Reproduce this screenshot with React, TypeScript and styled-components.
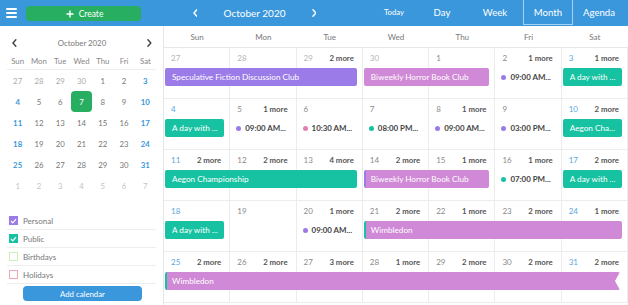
import React from "react"
import styled, { createGlobalStyle } from "styled-components"

const GlobalStyle = createGlobalStyle`
  html, body {
    margin: 0;
    padding: 0;
    background: #fff;
    font-family: Lato, "Open Sans", sans-serif;
  }
  * { box-sizing: border-box; }
`

const BLUE = "#3a97dc"
const GREEN = "#27ae60"
const PURPLE = "#9b7be8"
const PINK = "#d089d6"
const TEAL = "#17c2a2"

const Page = styled.div`
  width: 628px;
  height: 305px;
  overflow: hidden;
  display: flex;
  flex-direction: column;
`

const TopBar = styled.header`
  height: 26px;
  flex: none;
  background: ${BLUE};
  display: flex;
  align-items: stretch;
  color: #fff;
`

const BarLeft = styled.div`
  width: 164px;
  display: flex;
  align-items: center;
  padding-left: 6px;
  gap: 9px;
`

const Burger = styled.span`
  width: 11px;
  display: flex;
  flex-direction: column;
  gap: 2px;
  span {
    height: 2px;
    background: #fff;
    border-radius: 1px;
  }
`

const CreateButton = styled.button`
  width: 115px;
  height: 15px;
  margin-top: 1px;
  border: none;
  border-radius: 4px;
  background: ${GREEN};
  color: #fff;
  font: 8.5px Lato, sans-serif;
  display: flex;
  align-items: center;
  justify-content: center;
  gap: 5px;
  padding: 0 0 0 2px;
`

const NavGroup = styled.div`
  display: flex;
  align-items: center;
  margin-left: 21px;
`

const Arrow = styled.span`
  width: 20px;
  display: flex;
  justify-content: center;
`

const Title = styled.span`
  width: 99px;
  text-align: center;
  font-size: 10px;
`

const Tabs = styled.div`
  display: flex;
  margin-left: auto;
  margin-right: 3px;
`

const Tab = styled.div<{ $w: number; $active?: boolean; $small?: boolean }>`
  width: ${(p) => p.$w}px;
  display: flex;
  align-items: center;
  justify-content: center;
  font-size: ${(p) => (p.$small ? 7.8 : 9.6)}px;
  border: 1px solid ${(p) => (p.$active ? "rgba(255,255,255,0.55)" : "transparent")};
  border-top: none;
  margin-bottom: 1px;
`

const Body = styled.div`
  flex: 1;
  display: grid;
  grid-template-columns: 164px 1fr;
  min-height: 0;
`

const Sidebar = styled.aside`
  border-right: 1px solid #e6e6e6;
  padding: 8px 7px 0 7px;
  display: flex;
  flex-direction: column;
`

const MiniHead = styled.div`
  height: 18px;
  display: flex;
  align-items: center;
  justify-content: space-between;
  padding: 0 4px 0 5px;
  font-size: 7.8px;
  color: #777;
`

const MiniGrid = styled.div`
  display: grid;
  grid-template-columns: repeat(7, 1fr);
`

const MiniWeekday = styled.div`
  height: 18px;
  border-bottom: 1px solid #eee;
  display: flex;
  align-items: center;
  justify-content: center;
  padding-top: 1px;
  font-size: 7.8px;
  color: #888;
`

const MiniDay = styled.div<{ $tone: string; $selected?: boolean }>`
  height: 21px;
  display: flex;
  align-items: center;
  justify-content: center;
  font-size: 7.8px;
  color: ${(p) => (p.$selected ? "#fff" : p.$tone)};
  font-weight: ${(p) => (p.$tone === BLUE ? 700 : 400)};
  background: ${(p) => (p.$selected ? GREEN : "transparent")};
  border-radius: 4px;
  margin: 0 0.5px;
`

const CalList = styled.ul`
  list-style: none;
  margin: 16px 0 0 0;
  padding: 0;
`

const CalItem = styled.li`
  height: 18px;
  border-bottom: 1px solid #eee;
  display: flex;
  align-items: center;
  gap: 5px;
  padding-left: 2px;
  font-size: 8px;
  color: #777;
`

const Check = styled.span<{ $color: string; $checked?: boolean }>`
  width: 9px;
  height: 9px;
  border: 1px solid ${(p) => p.$color};
  background: ${(p) => (p.$checked ? p.$color : "#fff")};
  display: flex;
  align-items: center;
  justify-content: center;
`

const AddButton = styled.button`
  width: 119px;
  height: 15px;
  margin: 2px 0 0 16px;
  border: none;
  border-radius: 4px;
  background: ${BLUE};
  color: #fff;
  font: 7.8px Lato, sans-serif;
  padding: 0;
`

const Month = styled.main`
  display: grid;
  grid-template-rows: 22px repeat(5, 51px);
  min-width: 0;
`

const DayHeads = styled.div`
  display: grid;
  grid-template-columns: repeat(7, 1fr);
  border-bottom: 1px solid #e8e8e8;
`

const DayHead = styled.div`
  display: flex;
  align-items: center;
  justify-content: center;
  font-size: 8px;
  color: #777;
`

const Week = styled.div`
  display: grid;
  grid-template-columns: repeat(7, 1fr);
  grid-template-rows: 20px 18px 1fr;
  border-bottom: 1px solid #ececec;
`

const Cell = styled.div<{ $col: number }>`
  grid-column: ${(p) => p.$col};
  grid-row: 1 / -1;
  border-right: 1px solid #ececec;
`

const CellHead = styled.div`
  height: 20px;
  display: flex;
  align-items: center;
  justify-content: space-between;
  padding: 0 8px 0 7px;
  font-size: 8px;
`

const DayNum = styled.span<{ $tone: string }>`
  color: ${(p) => p.$tone};
`

const More = styled.span`
  color: #555;
  font-weight: 700;
  font-size: 7.8px;
`

const Bar = styled.div<{ $from: number; $span: number; $color: string; $edge?: string; $notch?: boolean }>`
  grid-row: 2;
  grid-column: ${(p) => p.$from} / span ${(p) => p.$span};
  margin: 0 ${(p) => (p.$notch ? 8 : 6)}px 0 1px;
  background: ${(p) => p.$color};
  border-left: 2px solid ${(p) => p.$edge || p.$color};
  border-radius: 2px;
  color: #fff;
  font-size: 8.2px;
  display: flex;
  align-items: center;
  padding-left: 5px;
  white-space: nowrap;
  overflow: hidden;
  z-index: 1;
  clip-path: ${(p) =>
    p.$notch ? "polygon(0 0, 100% 0, calc(100% - 5px) 50%, 100% 100%, 0 100%)" : "none"};
`

const Timed = styled.div<{ $col: number }>`
  grid-row: 2;
  grid-column: ${(p) => p.$col};
  display: flex;
  align-items: center;
  gap: 4px;
  padding-left: 6px;
  font-size: 7.9px;
  font-weight: 700;
  color: #444;
  white-space: nowrap;
  z-index: 1;
`

const Dot = styled.span<{ $color: string }>`
  width: 5px;
  height: 5px;
  border-radius: 50%;
  background: ${(p) => p.$color};
  flex: none;
`

const weekdays = ["Sun", "Mon", "Tue", "Wed", "Thu", "Fri", "Sat"]

type Day = { n: number; more?: number; out?: boolean }
type Ev =
  | { kind: "bar"; from: number; span: number; text: string; color: string; edge?: string; notch?: boolean }
  | { kind: "timed"; col: number; text: string; color: string }

const weeks: { days: Day[]; events: Ev[] }[] = [
  {
    days: [
      { n: 27, out: true },
      { n: 28, out: true },
      { n: 29, out: true, more: 2 },
      { n: 30, out: true },
      { n: 1 },
      { n: 2, more: 1 },
      { n: 3, more: 1 },
    ],
    events: [
      { kind: "bar", from: 1, span: 3, text: "Speculative Fiction Discussion Club", color: PURPLE },
      { kind: "bar", from: 4, span: 2, text: "Biweekly Horror Book Club", color: PINK },
      { kind: "timed", col: 6, text: "09:00 AM...", color: PURPLE },
      { kind: "bar", from: 7, span: 1, text: "A day with ...", color: TEAL },
    ],
  },
  {
    days: [{ n: 4 }, { n: 5, more: 1 }, { n: 6 }, { n: 7 }, { n: 8, more: 1 }, { n: 9 }, { n: 10, more: 2 }],
    events: [
      { kind: "bar", from: 1, span: 1, text: "A day with ...", color: TEAL },
      { kind: "timed", col: 2, text: "09:00 AM...", color: PURPLE },
      { kind: "timed", col: 3, text: "10:30 AM...", color: "#e07fb2" },
      { kind: "timed", col: 4, text: "08:00 PM...", color: TEAL },
      { kind: "timed", col: 5, text: "09:00 AM...", color: PURPLE },
      { kind: "timed", col: 6, text: "03:00 PM...", color: PURPLE },
      { kind: "bar", from: 7, span: 1, text: "Aegon Cha...", color: TEAL },
    ],
  },
  {
    days: [
      { n: 11, more: 2 },
      { n: 12, more: 2 },
      { n: 13, more: 4 },
      { n: 14, more: 2 },
      { n: 15, more: 1 },
      { n: 16, more: 1 },
      { n: 17, more: 2 },
    ],
    events: [
      { kind: "bar", from: 1, span: 3, text: "Aegon Championship", color: TEAL },
      { kind: "bar", from: 4, span: 2, text: "Biweekly Horror Book Club", color: PINK, edge: PURPLE },
      { kind: "timed", col: 6, text: "07:00 PM...", color: TEAL },
      { kind: "bar", from: 7, span: 1, text: "A day with ...", color: TEAL },
    ],
  },
  {
    days: [
      { n: 18 },
      { n: 19 },
      { n: 20, more: 1 },
      { n: 21, more: 2 },
      { n: 22, more: 1 },
      { n: 23, more: 2 },
      { n: 24, more: 1 },
    ],
    events: [
      { kind: "bar", from: 1, span: 1, text: "A day with ...", color: TEAL },
      { kind: "timed", col: 3, text: "09:00 AM...", color: PURPLE },
      { kind: "bar", from: 4, span: 4, text: "Wimbledon", color: PINK, edge: TEAL },
    ],
  },
  {
    days: [
      { n: 25, more: 2 },
      { n: 26, more: 2 },
      { n: 27, more: 3 },
      { n: 28, more: 1 },
      { n: 29, more: 2 },
      { n: 30, more: 2 },
      { n: 31, more: 2 },
    ],
    events: [{ kind: "bar", from: 1, span: 7, text: "Wimbledon", color: PINK, edge: TEAL, notch: true }],
  },
]

const mini: { n: number; out?: boolean }[][] = [
  [27, 28, 29, 30].map((n) => ({ n, out: true })).concat([1, 2, 3].map((n) => ({ n }))),
  [4, 5, 6, 7, 8, 9, 10].map((n) => ({ n })),
  [11, 12, 13, 14, 15, 16, 17].map((n) => ({ n })),
  [18, 19, 20, 21, 22, 23, 24].map((n) => ({ n })),
  [25, 26, 27, 28, 29, 30, 31].map((n) => ({ n })),
  [1, 2, 3, 4, 5, 6, 7].map((n) => ({ n, out: true })),
]

const calendars = [
  { name: "Personal", color: PURPLE, checked: true },
  { name: "Public", color: TEAL, checked: true },
  { name: "Birthdays", color: "#cdeeb4", checked: false },
  { name: "Holidays", color: "#f3a6b4", checked: false },
]

const Tick = () => (
  <svg width="7" height="6" viewBox="0 0 7 6">
    <path d="M1 3 L2.8 4.8 L6 1.2" stroke="#fff" strokeWidth="1.2" fill="none" />
  </svg>
)

const Chevron = ({ dir, color, size = 8 }: { dir: "left" | "right"; color: string; size?: number }) => (
  <svg width={size * 0.6} height={size} viewBox="0 0 6 10">
    <path
      d={dir === "left" ? "M4.8 1 L1.2 5 L4.8 9" : "M1.2 1 L4.8 5 L1.2 9"}
      stroke={color}
      strokeWidth="1.8"
      fill="none"
      strokeLinecap="round"
      strokeLinejoin="round"
    />
  </svg>
)

const Plus = () => (
  <svg width="8" height="8" viewBox="0 0 8 8">
    <path d="M4 0.5 V7.5 M0.5 4 H7.5" stroke="#fff" strokeWidth="1.4" />
  </svg>
)

export default function App() {
  return (
    <Page>
      <GlobalStyle />
      <TopBar>
        <BarLeft>
          <Burger>
            <span />
            <span />
            <span />
          </Burger>
          <CreateButton>
            <Plus />
            Create
          </CreateButton>
        </BarLeft>
        <NavGroup>
          <Arrow>
            <Chevron dir="left" color="#fff" />
          </Arrow>
          <Title>October 2020</Title>
          <Arrow>
            <Chevron dir="right" color="#fff" />
          </Arrow>
        </NavGroup>
        <Tabs>
          <Tab $w={46} $small>
            Today
          </Tab>
          <Tab $w={50}>Day</Tab>
          <Tab $w={56}>Week</Tab>
          <Tab $w={50} $active>
            Month
          </Tab>
          <Tab $w={52}>Agenda</Tab>
        </Tabs>
      </TopBar>
      <Body>
        <Sidebar>
          <MiniHead>
            <Chevron dir="left" color="#444" />
            <span>October 2020</span>
            <Chevron dir="right" color="#444" />
          </MiniHead>
          <MiniGrid>
            {weekdays.map((d) => (
              <MiniWeekday key={d}>{d}</MiniWeekday>
            ))}
            {mini.map((row, r) =>
              row.map((d, i) => {
                const weekend = i === 0 || i === 6
                const tone = d.out ? (r === 0 ? "#aaa" : "#c4c4c4") : weekend ? BLUE : "#777"
                return (
                  <MiniDay key={`${r}-${i}`} $tone={tone} $selected={!d.out && d.n === 7}>
                    {d.n}
                  </MiniDay>
                )
              })
            )}
          </MiniGrid>
          <CalList>
            {calendars.map((c) => (
              <CalItem key={c.name}>
                <Check $color={c.color} $checked={c.checked}>
                  {c.checked && <Tick />}
                </Check>
                {c.name}
              </CalItem>
            ))}
          </CalList>
          <AddButton>Add calendar</AddButton>
        </Sidebar>
        <Month>
          <DayHeads>
            {weekdays.map((d) => (
              <DayHead key={d}>{d}</DayHead>
            ))}
          </DayHeads>
          {weeks.map((w, wi) => (
            <Week key={wi}>
              {w.days.map((d, i) => {
                const tone = d.out ? "#b5b5b5" : i === 0 || i === 6 ? "#5aa6e0" : "#8a8a8a"
                return (
                  <Cell key={i} $col={i + 1}>
                    <CellHead>
                      <DayNum $tone={tone}>{d.n}</DayNum>
                      {d.more && <More>{d.more} more</More>}
                    </CellHead>
                  </Cell>
                )
              })}
              {w.events.map((e, ei) =>
                e.kind === "bar" ? (
                  <Bar key={ei} $from={e.from} $span={e.span} $color={e.color} $edge={e.edge} $notch={e.notch}>
                    {e.text}
                  </Bar>
                ) : (
                  <Timed key={ei} $col={e.col}>
                    <Dot $color={e.color} />
                    {e.text}
                  </Timed>
                )
              )}
            </Week>
          ))}
        </Month>
      </Body>
    </Page>
  )
}
